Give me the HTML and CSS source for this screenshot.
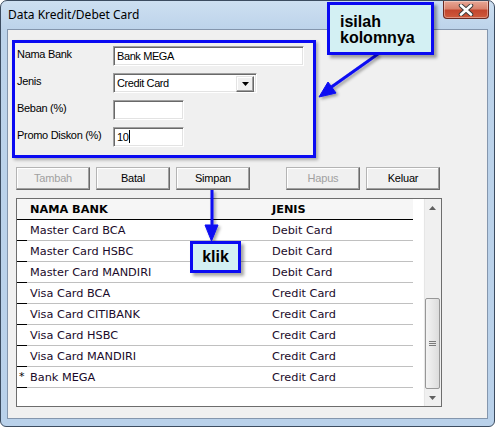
FILE: index.html
```html
<!DOCTYPE html>
<html>
<head>
<meta charset="utf-8">
<link rel="stylesheet" href="styles.css">
</head>
<body>
<div class="window">
  <div class="titlebar">
    <span class="title">Data Kredit/Debet Card</span>
    <div class="close">
      <svg width="20" height="12" viewBox="0 0 20 12">
        <path d="M5 1.5 L15 10.5 M15 1.5 L5 10.5" stroke="#3b3b3b" stroke-width="4.5" stroke-linecap="round"/>
        <path d="M5 1.5 L15 10.5 M15 1.5 L5 10.5" stroke="#ffffff" stroke-width="2.6" stroke-linecap="round"/>
      </svg>
    </div>
  </div>
  <div class="client">
    <div class="form-box">
      <div class="lbl lbl-name">Nama Bank</div>
      <div class="field f-name">Bank MEGA</div>
      <div class="lbl">Jenis</div>
      <div class="field f-combo">Credit Card
        <span class="combo-btn"><svg width="7" height="4" viewBox="0 0 7 4"><path d="M0 0H7L3.5 4Z" fill="#000"/></svg></span>
      </div>
      <div class="lbl">Beban (%)</div>
      <div class="field f-small"></div>
      <div class="lbl">Promo Diskon (%)</div>
      <div class="field f-small">10<span class="caret"></span></div>
    </div>

    <div class="buttons">
      <div class="btn disabled">Tambah</div>
      <div class="btn">Batal</div>
      <div class="btn">Simpan</div>
      <div class="btn disabled gap">Hapus</div>
      <div class="btn">Keluar</div>
    </div>

    <div class="grid">
      <div class="grid-body">
        <div class="row head">
          <div class="sel"></div>
          <div class="c1">NAMA BANK</div>
          <div class="c2">JENIS</div>
        </div>
        <div class="row"><div class="sel"></div><div class="c1">Master Card BCA</div><div class="c2">Debit Card</div></div>
        <div class="row"><div class="sel"></div><div class="c1">Master Card HSBC</div><div class="c2">Debit Card</div></div>
        <div class="row"><div class="sel"></div><div class="c1">Master Card MANDIRI</div><div class="c2">Debit Card</div></div>
        <div class="row"><div class="sel"></div><div class="c1">Visa Card BCA</div><div class="c2">Credit Card</div></div>
        <div class="row"><div class="sel"></div><div class="c1">Visa Card CITIBANK</div><div class="c2">Credit Card</div></div>
        <div class="row"><div class="sel"></div><div class="c1">Visa Card HSBC</div><div class="c2">Credit Card</div></div>
        <div class="row"><div class="sel"></div><div class="c1">Visa Card MANDIRI</div><div class="c2">Credit Card</div></div>
        <div class="row"><div class="sel">*</div><div class="c1">Bank MEGA</div><div class="c2">Credit Card</div></div>
      </div>
      <div class="scrollbar">
        <div class="sb-arrow"><svg width="7" height="4" viewBox="0 0 7 4"><path d="M0 4H7L3.5 0Z" fill="#606060"/></svg></div>
        <div class="sb-track"></div>
        <div class="sb-thumb"><span class="grip"></span></div>
        <div class="sb-arrow"><svg width="7" height="4" viewBox="0 0 7 4"><path d="M0 0H7L3.5 4Z" fill="#606060"/></svg></div>
      </div>
    </div>
  </div>

  <svg class="arrows" width="495" height="427" viewBox="0 0 495 427">
    <defs>
      <filter id="sh" x="-20%" y="-20%" width="150%" height="150%">
        <feDropShadow dx="2" dy="2" stdDeviation="1.5" flood-color="#000" flood-opacity="0.35"/>
      </filter>
    </defs>
    <g filter="url(#sh)" fill="#0a0af2" stroke="#0a0af2">
      <line x1="378" y1="54" x2="330" y2="88" stroke-width="3"/>
      <path d="M319 97 L336 93 L328 82 Z" stroke-width="1"/>
      <line x1="212" y1="190" x2="212" y2="228" stroke-width="3"/>
      <path d="M211.5 241 L205 225 L218 225 Z" stroke-width="1"/>
    </g>
  </svg>
  <div class="callout callout-isi">isilah<br>kolomnya</div>
  <div class="callout callout-klik">klik</div>
</div>
</body>
</html>
```
FILE: styles.css
```css
* { box-sizing: border-box; }
html, body { margin: 0; padding: 0; background: #ffffff; }

.window {
  position: relative;
  width: 495px;
  height: 427px;
  border: 1px solid #3c4c60;
  border-radius: 7px 7px 6px 6px;
  background: linear-gradient(#cddff1 0px, #bcd3ea 30px, #b9d1ea 100%);
  display: flex;
  flex-direction: column;
  overflow: hidden;
}

.titlebar {
  height: 28px;
  display: flex;
  align-items: flex-start;
  padding-left: 7px;
}
.title {
  font-family: "Noto Sans", "Open Sans", sans-serif;
  font-size: 12px;
  line-height: 28px;
  color: #000;
}
.close {
  margin-left: auto;
  margin-right: 5px;
  width: 46px;
  height: 18px;
  border: 1px solid #6b2a22;
  border-top: none;
  border-radius: 0 0 4px 4px;
  background: linear-gradient(#e8a796 0%, #d9836e 45%, #c3462e 55%, #cf5a3c 100%);
  box-shadow: inset 0 0 0 1px rgba(255,255,255,0.35);
  display: flex;
  align-items: center;
  justify-content: center;
}

.client {
  flex: 1;
  margin: 0 6px 7px 6px;
  background: #f0f0f0;
  border: 1px solid #8496ad;
  display: flex;
  flex-direction: column;
  align-items: flex-start;
  font-family: "Liberation Sans", Arial, sans-serif;
  font-size: 11px;
  color: #000;
}

.form-box {
  margin: 10px 0 0 4px;
  width: 304px;
  border: 3px solid #0a0af2;
  box-shadow: 2px 2px 3px rgba(0,0,0,0.3);
  padding: 3px 0 8px 2px;
  display: grid;
  grid-template-columns: 96px auto;
  grid-auto-rows: 20px;
  row-gap: 7px;
  align-items: center;
}
.lbl { line-height: 13px; margin-top: -3px; letter-spacing: -0.3px; white-space: nowrap; }
.lbl-name { align-self: start; margin-top: 2px; }

.field {
  height: 20px;
  background: #fff;
  border: 1px solid;
  border-color: #a0a0a0 #ffffff #ffffff #a0a0a0;
  box-shadow: inset 1px 1px #696969, inset -1px -1px #e3e3e3;
  padding: 0 0 0 3px;
  font-size: 11px;
  letter-spacing: -0.4px;
  line-height: 18px;
  position: relative;
  white-space: nowrap;
}
.f-name { width: 191px; }
.f-combo { width: 144px; }
.f-small { width: 71px; }
.combo-btn {
  position: absolute;
  right: 2px;
  top: 2px;
  width: 18px;
  height: 16px;
  background: #f0f0f0;
  border: 1px solid;
  border-color: #e3e3e3 #696969 #696969 #e3e3e3;
  box-shadow: inset -1px -1px #a0a0a0, inset 1px 1px #fff;
  display: flex;
  align-items: center;
  justify-content: center;
}
.caret {
  display: inline-block;
  width: 1px;
  height: 13px;
  background: #000;
  vertical-align: -2px;
  margin-left: 1px;
}

.buttons {
  margin: 9px 0 0 8px;
  display: flex;
  gap: 6px;
}
.btn {
  width: 74px;
  height: 23px;
  border: 1px solid;
  border-color: #b4b4b4 #6a6a6a #6a6a6a #b4b4b4;
  box-shadow: inset -1px -1px #a0a0a0, inset 1px 1px #ffffff;
  background: #f0f0f0;
  display: flex;
  align-items: center;
  justify-content: center;
  font-size: 11px;
  letter-spacing: -0.2px;
  padding-bottom: 1px;
}
.btn.disabled { color: #a0a0a0; }
.btn.gap { margin-left: 30px; }

.grid {
  margin: 8px 0 0 8px;
  width: 426px;
  height: 209px;
  border: 1px solid #6d6d6d;
  display: flex;
  background: #fff;
  font-family: "DejaVu Sans", Verdana, sans-serif;
  font-size: 11.3px;
}
.grid-body {
  width: 406px;
  display: flex;
  flex-direction: column;
}
.row {
  width: 396px;
  height: 21px;
  display: flex;
  color: #1a0a2a;
}
.row .sel {
  width: 10px;
  border-bottom: 1px solid #000;
  font-size: 11px;
  line-height: 20px;
  padding-left: 2px;
  color: #000;
}
.row .c1, .row .c2 {
  border-bottom: 1px solid #c0c0c0;
  line-height: 21px;
  white-space: nowrap;
}
.row .c1 { width: 245px; padding-left: 3px; }
.row .c2 { flex: 1; }
.row.head {
  height: 21px;
  background: #f6f6f6;
  font-weight: bold;
  color: #000;
}
.row.head .sel, .row.head .c1, .row.head .c2 { border-bottom: 1px solid #000; }

.scrollbar {
  width: 18px;
  display: flex;
  flex-direction: column;
  background: #f0f0f0;
  border-left: 1px solid #fdfdfd;
  box-shadow: inset 1px 0 #e6e6e6;
}
.sb-arrow {
  height: 17px;
  display: flex;
  align-items: center;
  justify-content: center;
}
.sb-track { flex: 1; }
.sb-thumb {
  height: 91px;
  margin: 0 1px 0 1px;
  border: 1px solid #979797;
  border-radius: 2px;
  background: linear-gradient(90deg, #f3f3f3, #e6e6e6 60%, #dcdcdc);
  display: flex;
  align-items: center;
  justify-content: center;
}
.grip {
  width: 7px;
  height: 5px;
  background: repeating-linear-gradient(#7a7a7a 0 1px, transparent 1px 2px);
}

.arrows {
  position: absolute;
  left: -1px;
  top: -1px;
  pointer-events: none;
}
.callout {
  position: absolute;
  background: #d3f0f3;
  border: 3px solid #0a0af2;
  box-shadow: 3px 3px 3px rgba(0,0,0,0.35);
  font-family: "Liberation Sans", Arial, sans-serif;
  font-weight: bold;
  font-size: 16px;
  color: #000;
}
.callout-isi {
  left: 326px;
  top: 1px;
  width: 107px;
  height: 53px;
  padding: 9px 0 0 10px;
  line-height: 16px;
}
.callout-klik {
  left: 189px;
  top: 240px;
  width: 51px;
  height: 32px;
  display: flex;
  align-items: center;
  justify-content: center;
  padding-bottom: 1px;
}
```
